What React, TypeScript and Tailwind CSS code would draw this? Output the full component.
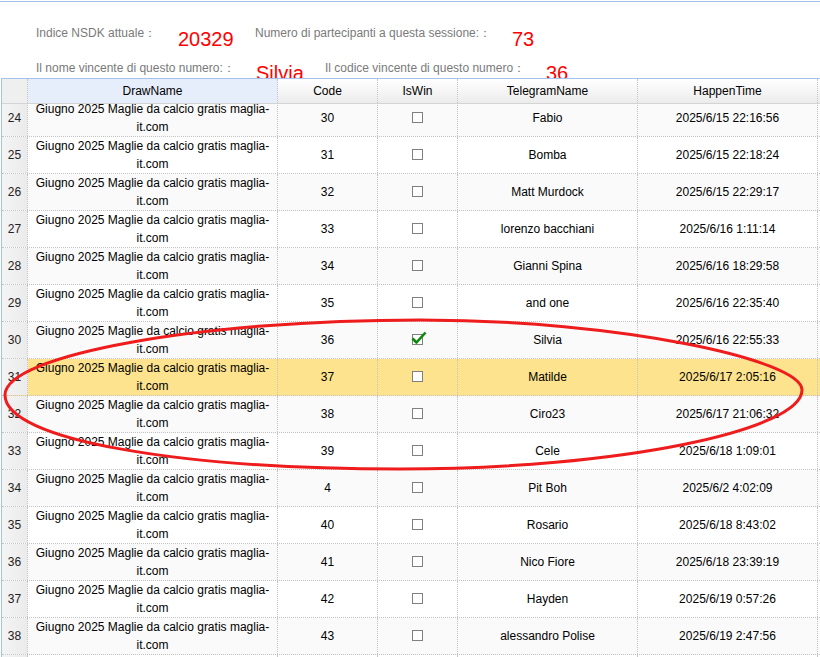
import React from "react";

type Row = {
  n: number;
  code: string;
  name: string;
  time: string;
  win?: boolean;
  hot?: boolean;
};

const rows: Row[] = [
  { n: 24, code: "30", name: "Fabio", time: "2025/6/15 22:16:56" },
  { n: 25, code: "31", name: "Bomba", time: "2025/6/15 22:18:24" },
  { n: 26, code: "32", name: "Matt Murdock", time: "2025/6/15 22:29:17" },
  { n: 27, code: "33", name: "lorenzo bacchiani", time: "2025/6/16 1:11:14" },
  { n: 28, code: "34", name: "Gianni Spina", time: "2025/6/16 18:29:58" },
  { n: 29, code: "35", name: "and one", time: "2025/6/16 22:35:40" },
  { n: 30, code: "36", name: "Silvia", time: "2025/6/16 22:55:33", win: true },
  { n: 31, code: "37", name: "Matilde", time: "2025/6/17 2:05:16", hot: true },
  { n: 32, code: "38", name: "Ciro23", time: "2025/6/17 21:06:32" },
  { n: 33, code: "39", name: "Cele", time: "2025/6/18 1:09:01" },
  { n: 34, code: "4", name: "Pit Boh", time: "2025/6/2 4:02:09" },
  { n: 35, code: "40", name: "Rosario", time: "2025/6/18 8:43:02" },
  { n: 36, code: "41", name: "Nico Fiore", time: "2025/6/18 23:39:19" },
  { n: 37, code: "42", name: "Hayden", time: "2025/6/19 0:57:26" },
  { n: 38, code: "43", name: "alessandro Polise", time: "2025/6/19 2:47:56" },
  { n: 39, code: "44", name: "Marco", time: "2025/6/19 9:12:40" },
];

const grid = "grid grid-cols-[26px_250px_100px_80px_180px_180px_1fr]";
const cell =
  "border-r border-dotted border-[#c4c4c4] flex items-center justify-center text-center";

const Box: React.FC<{ checked?: boolean }> = ({ checked }) => (
  <span className="relative inline-block w-[11px] h-[11px] border border-[#808080] bg-white -mt-[1px]">
    {checked && (
      <svg
        className="absolute -left-[2px] -top-[4px]"
        width="16"
        height="14"
        viewBox="0 0 16 14"
      >
        <path
          d="M1.5 7.5 L5.5 11.5 L14.5 1.5"
          fill="none"
          stroke="#0a8a0a"
          strokeWidth="2.6"
          strokeLinejoin="round"
        />
      </svg>
    )}
  </span>
);

export default function App() {
  return (
    <div className="relative w-[820px] h-[657px] overflow-hidden bg-white font-['Liberation_Sans',Arial,sans-serif] text-[12px] text-black">
      {/* info block */}
      <div className="h-[78px] overflow-hidden pt-[1px]">
        <div className="border-t border-[#a4c2ea]" />
        <div className="pl-[36px] pt-[24px] flex flex-col text-[#7a7a7a]">
          <div className="flex items-start h-[35px]">
            <span className="w-[142px] leading-[14px]">Indice NSDK attuale：</span>
            <span className="w-[77px] text-[20px] leading-[24px] text-[#ff0000] mt-[1px]">20329</span>
            <span className="w-[257px] leading-[14px]">Numero di partecipanti a questa sessione:：</span>
            <span className="text-[20px] leading-[24px] text-[#ff0000] mt-[1px]">73</span>
          </div>
          <div className="flex items-start">
            <span className="w-[220px] leading-[14px]">Il nome vincente di questo numero:：</span>
            <span className="w-[69px] text-[20px] leading-[24px] text-[#ff0000]">Silvia</span>
            <span className="w-[221px] leading-[14px]">Il codice vincente di questo numero：</span>
            <span className="text-[20px] leading-[24px] text-[#ff0000]">36</span>
          </div>
        </div>
      </div>

      {/* grid */}
      <div className="ml-[1px] border-l border-t border-[#a4c2ea]">
        <div className={`${grid} relative z-10 h-[25px] border-b border-[#d4d4d4] bg-gradient-to-b from-white to-[#ececec]`}>
          <div className={`${cell} bg-[#efefef]`} />
          <div className={`${cell} bg-[#e6eefb]`}>DrawName</div>
          <div className={cell}>Code</div>
          <div className={cell}>IsWin</div>
          <div className={cell}>TelegramName</div>
          <div className={cell}>HappenTime</div>
          <div />
        </div>
        <div className="overflow-hidden">
          <div className="-mt-[4px]">
            {rows.map((r, i) => (
              <div
                key={r.n}
                className={`${grid} h-[37px] border-b border-dotted border-[#c4c4c4] ${
                  r.hot ? "bg-[#fde38e]" : i % 2 === 0 ? "bg-[#fafafa]" : "bg-white"
                }`}
              >
                <div className={`${cell} bg-gradient-to-r from-[#f4f4f4] to-[#ebebeb] text-[#222]`}>
                  {r.n}
                </div>
                <div className={`${cell} leading-[18px]`}>
                  <span>
                    Giugno 2025 Maglie da calcio gratis maglia-
                    <br />
                    it.com
                  </span>
                </div>
                <div className={cell}>{r.code}</div>
                <div className={cell}>
                  <Box checked={r.win} />
                </div>
                <div className={cell}>{r.name}</div>
                <div className={cell}>{r.time}</div>
                <div />
              </div>
            ))}
          </div>
        </div>
      </div>

      {/* hand-drawn marker */}
      <svg
        className="absolute left-0 top-0 pointer-events-none"
        width="820"
        height="657"
        viewBox="0 0 820 657"
      >
        <path
          d="M5 395 C5 355 200 320 420 320 C620 320 802 360 802 390 C802 430 620 469 400 469 C180 469 5 440 5 395 Z"
          fill="none"
          stroke="#ee1c1c"
          strokeWidth="3"
        />
      </svg>
    </div>
  );
}
